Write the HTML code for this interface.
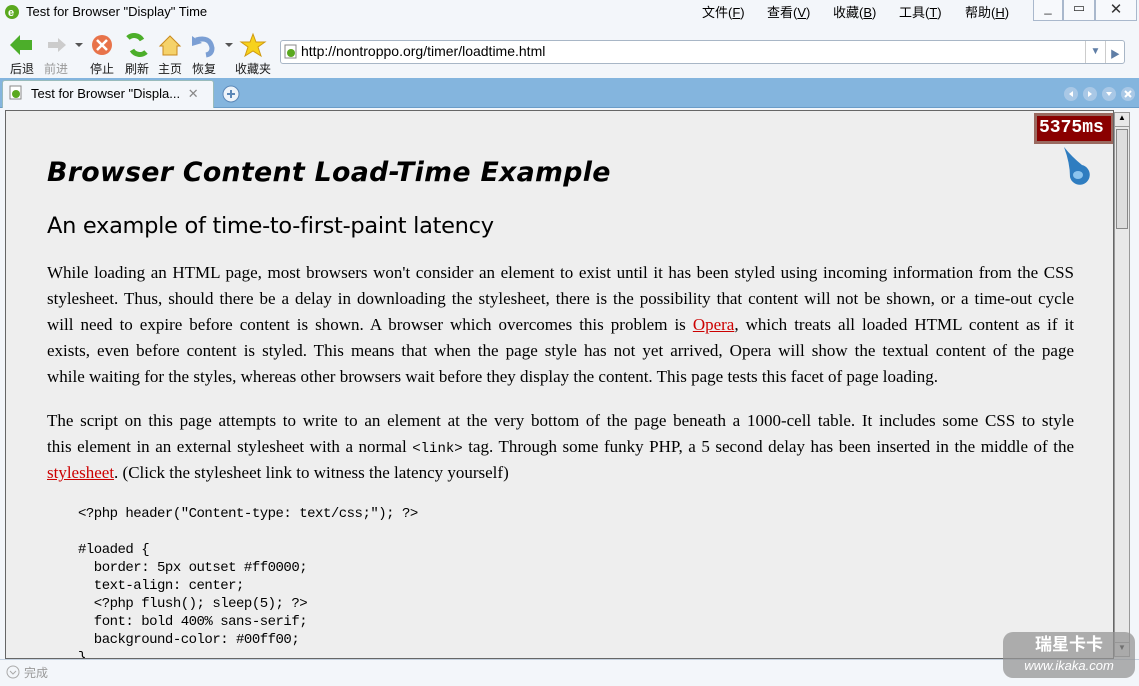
<!DOCTYPE html>
<html><head><meta charset="utf-8"><style>
*{margin:0;padding:0;box-sizing:border-box}
body{width:1139px;height:686px;overflow:hidden;background:#f3f6fa;font-family:"Liberation Sans","Noto Sans CJK SC",sans-serif;position:relative;font-size:13px;color:#000}
.abs{position:absolute}
.title{left:26px;top:4px;font-size:13px}
.menu{top:2px;font-size:13px}
.wbtn{top:0;height:21px;border:1px solid #a9b8cc;border-top:none;background:#f7f9fc;text-align:center;color:#333}
.tb{top:60px;font-size:12px;color:#1a1a1a}
.addr{left:280px;top:40px;width:845px;height:24px;border:1px solid #a8b6c6;border-radius:3px;background:#fff;font-size:14px;padding:2px 0 0 20px}
.tabbar{left:0;top:78px;width:1139px;height:30px;background:#84b5de;border-bottom:1px solid #6a9cc8}
.tab{left:2px;top:80px;width:212px;height:28px;background:#f3f6fa;border:1px solid #9bb;border-bottom:none;border-radius:3px 3px 0 0;font-size:13px;padding:5px 0 0 28px}
.content{left:5px;top:110px;width:1109px;height:549px;background:#eeeeee;border:1px solid #666;overflow:hidden}
.sb{left:1114px;top:112px;width:16px;height:545px;background:#e8e8e8;border:1px solid #999}
.status{left:0;top:659px;width:1139px;height:27px;background:#f3f6fa;border-top:1px solid #c4d0de}
h1{position:absolute;left:41px;top:46px;font:italic bold 26.8px "DejaVu Sans",sans-serif;letter-spacing:.3px}
h2{position:absolute;left:41px;top:102px;font:normal 22.5px "DejaVu Sans",sans-serif;letter-spacing:-.3px}
.p{position:absolute;left:41px;width:1027px;font:17px "Liberation Serif",serif;}
.p div{height:26px;text-align:justify;text-align-last:justify;white-space:nowrap;overflow:visible}
.p div.l{text-align-last:left}
a{color:#c00;text-decoration:underline}
pre{position:absolute;left:72px;top:394px;font:14px/18px "Liberation Mono",monospace;letter-spacing:-.5px}
</style></head><body>
<svg class="abs" style="left:4px;top:4px" width="16" height="16"><circle cx="8" cy="8" r="7" fill="#5aa81e"/><text x="4" y="12" font-size="11" font-weight="bold" fill="#fff">e</text></svg>
<div class="abs title">Test for Browser "Display" Time</div>
<div class="abs menu" style="left:702px">文件(<u>F</u>)</div>
<div class="abs menu" style="left:767px">查看(<u>V</u>)</div>
<div class="abs menu" style="left:833px">收藏(<u>B</u>)</div>
<div class="abs menu" style="left:899px">工具(<u>T</u>)</div>
<div class="abs menu" style="left:965px">帮助(<u>H</u>)</div>
<div class="abs wbtn" style="left:1033px;width:30px">_</div>
<div class="abs wbtn" style="left:1063px;width:32px">▭</div>
<div class="abs wbtn" style="left:1095px;width:42px;font-size:15px">✕</div>
<svg class="abs" style="left:0;top:30px" width="280" height="30">
<path d="M10 15 L20 5 L20 10 L32 10 L32 20 L20 20 L20 25Z" fill="#4cae2a"/>
<path d="M66 15 L58 8 L58 12 L48 12 L48 18 L58 18 L58 22Z" fill="#ccc"/>
<path d="M75 13 l4 4 l4-4z" fill="#555"/>
<circle cx="102" cy="15" r="10" fill="#e8734a"/><path d="M97 10 L107 20 M107 10 L97 20" stroke="#fff" stroke-width="2.5"/>
<path d="M128 8 a9 9 0 0 1 14 2 M146 22 a9 9 0 0 1 -14 -2" stroke="#4cae2a" stroke-width="5" fill="none"/>
<path d="M160 16 L170 6 L180 16 L177 16 L177 25 L163 25 L163 16Z" fill="#f5d26a" stroke="#c98a1e"/>
<path d="M196 10 q14 -4 16 8 q0 6 -6 7" stroke="#7b9fd4" stroke-width="5" fill="none"/><path d="M192 6 l0 10 l10 -3z" fill="#7b9fd4"/>
<path d="M225 13 l4 4 l4-4z" fill="#555"/>
<path d="M253 4 l3 8 l9 0 l-7 5 l3 9 l-8-5 l-8 5 l3-9 l-7-5 l9 0z" fill="#f7d21c" stroke="#d09a10"/>
</svg>
<div class="abs tb" style="left:10px">后退</div>
<div class="abs tb" style="left:44px;color:#999">前进</div>
<div class="abs tb" style="left:90px">停止</div>
<div class="abs tb" style="left:125px">刷新</div>
<div class="abs tb" style="left:158px">主页</div>
<div class="abs tb" style="left:192px">恢复</div>
<div class="abs tb" style="left:235px">收藏夹</div>
<div class="abs addr">http://nontroppo.org/timer/loadtime.html</div>
<svg class="abs" style="left:284px;top:44px" width="14" height="15"><rect x="1" y="1" width="11" height="13" fill="#fff" stroke="#888"/><circle cx="7" cy="9" r="4" fill="#5aa81e"/></svg>
<div class="abs" style="left:1085px;top:41px;width:20px;height:22px;border-left:1px solid #ccc;color:#5f7ea6;font-size:10px;text-align:center;padding-top:5px">▼</div>
<div class="abs" style="left:1105px;top:41px;width:19px;height:22px;border-left:1px solid #ccc;color:#5f7ea6;font-size:10px;text-align:center;padding-top:5px">▶</div>
<div class="abs tabbar"></div>
<div class="abs tab">Test for Browser "Displa... <span style="color:#888;margin-left:4px">✕</span></div>
<svg class="abs" style="left:9px;top:85px" width="14" height="15"><rect x="1" y="1" width="11" height="13" fill="#fff" stroke="#888"/><circle cx="7" cy="9" r="4" fill="#5aa81e"/></svg>
<svg class="abs" style="left:222px;top:85px" width="18" height="18"><circle cx="9" cy="9" r="8" fill="#eef4fa" stroke="#5c88b8"/><path d="M5 9h8M9 5v8" stroke="#5c88b8" stroke-width="2"/></svg>
<svg class="abs" style="left:1062px;top:85px" width="77" height="18"><g fill="#a9c8e6"><circle cx="9" cy="9" r="7"/><circle cx="28" cy="9" r="7"/><circle cx="47" cy="9" r="7"/><circle cx="66" cy="9" r="7"/></g><g fill="#fff"><path d="M11 6 l-4 3 l4 3z M26 6 l4 3 l-4 3z M44 7 l6 0 l-3 4z"/></g><path d="M63 6 l6 6 M69 6 l-6 6" stroke="#fff" stroke-width="2"/></svg>
<div class="abs content">
<h1>Browser Content Load-Time Example</h1>
<h2>An example of time-to-first-paint latency</h2>
<div class="p" style="top:152px">
<div>While loading an HTML page, most browsers won't consider an element to exist until it has been styled using incoming information from the CSS</div>
<div>stylesheet. Thus, should there be a delay in downloading the stylesheet, there is the possibility that content will not be shown, or a time-out cycle</div>
<div>will need to expire before content is shown. A browser which overcomes this problem is <a>Opera</a>, which treats all loaded HTML content as if it</div>
<div>exists, even before content is styled. This means that when the page style has not yet arrived, Opera will show the textual content of the page</div>
<div class="l">while waiting for the styles, whereas other browsers wait before they display the content. This page tests this facet of page loading.</div>
</div>
<div class="p" style="top:300px">
<div>The script on this page attempts to write to an element at the very bottom of the page beneath a 1000-cell table. It includes some CSS to style</div>
<div>this element in an external stylesheet with a normal <span style="font-family:'Liberation Mono',monospace;font-size:14px">&lt;link&gt;</span> tag. Through some funky PHP, a 5 second delay has been inserted in the middle of the</div>
<div class="l"><a>stylesheet</a>. (Click the stylesheet link to witness the latency yourself)</div>
</div>
<pre>&lt;?php header("Content-type: text/css;"); ?&gt;

#loaded {
  border: 5px outset #ff0000;
  text-align: center;
  &lt;?php flush(); sleep(5); ?&gt;
  font: bold 400% sans-serif;
  background-color: #00ff00;
}</pre>
<div class="abs" style="left:1028px;top:2px;width:80px;height:31px;background:#8a0000;border:3px solid #9a6a60;color:#fff;font:bold 18px 'Liberation Mono',monospace;padding:2px 0 0 2px">5375ms</div>
<svg class="abs" style="left:1052px;top:34px" width="36" height="42"><path d="M6 2 Q14 12 24 20 A10 10 0 1 1 12 32 Q12 18 6 2Z" fill="#2f7dc0"/><ellipse cx="20" cy="30" rx="5" ry="4" fill="#8cc4ee"/></svg>
</div>
<div class="abs sb"><div style="height:14px;border-bottom:1px solid #999;font-size:8px;text-align:center">▲</div><div style="margin:2px 1px;height:100px;background:#ddd;border:1px solid #888"></div><div style="position:absolute;bottom:0;height:14px;width:14px;border-top:1px solid #999;font-size:8px;text-align:center">▼</div></div>
<div class="abs status"></div>
<svg class="abs" style="left:5px;top:664px" width="16" height="16"><circle cx="8" cy="8" r="6" fill="none" stroke="#aaa"/><path d="M5 7l3 3l3-3" stroke="#aaa" fill="none"/></svg>
<div class="abs" style="left:24px;top:664px;color:#999;font-size:12px">完成</div>
<div class="abs" style="left:1003px;top:632px;width:132px;height:46px;background:rgba(150,150,150,.75);border-radius:10px;color:#fff;text-align:center;font-size:17px;font-weight:bold;padding-top:3px;line-height:20px">瑞星卡卡<br><span style="font-size:13px;font-weight:normal;font-style:italic">www.ikaka.com</span></div>
</body></html>
